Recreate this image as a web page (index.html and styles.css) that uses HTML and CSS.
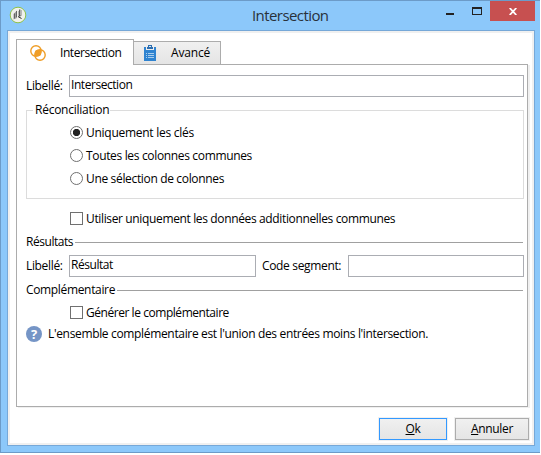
FILE: index.html
```
<!DOCTYPE html>
<html lang="fr">
<head>
<meta charset="utf-8">
<title>Intersection</title>
<link rel="stylesheet" href="styles.css">
</head>
<body>
<div class="window">
  <header class="titlebar">
    <svg class="app-icon" width="18" height="18" viewBox="0 0 18 18"><circle cx="9" cy="9" r="7.8" fill="#f1f1ec" stroke="#8fc24a" stroke-width="1"/><path d="M4.5 8L8 4.5V12L4.5 13.5Z" fill="#a0a0a0"/><path d="M5.5 7.5v5M7.5 5v6" stroke="#555" stroke-width=".8"/><path d="M9.5 5v4.5h3V4" fill="none" stroke="#aaa" stroke-width=".8"/><path d="M10.8 3.5v7M9 10.5l3.5 2" stroke="#222"/></svg>
    <h1 class="title">Intersection</h1>
    <div class="controls">
      <span class="minimize"></span>
      <span class="maximize"></span>
      <span class="close"><svg width="8" height="7" viewBox="0 0 8 7"><path d="M.7 0L7.3 7M7.3 0L.7 7" stroke="#fff" stroke-width="1.8"/></svg></span>
    </div>
  </header>
  <main class="client">
    <nav class="tabs">
      <div class="tab active">
        <svg width="18" height="18" viewBox="0 0 18 18"><path d="M5.9 11.9A5.2 5.2 0 0 1 11.9 5.9A5.2 5.2 0 0 1 5.9 11.9Z" fill="#ef9d26"/><g stroke="#ef9d26" stroke-width="1.4" fill="none"><circle cx="7" cy="7" r="5.2"/><circle cx="11" cy="11" r="5.2"/></g><circle cx="9" cy="9" r="3.2" fill="#ef9d26"/></svg>
        <span class="narrow">Intersection</span>
      </div>
      <div class="tab second">
        <svg width="12" height="16" viewBox="0 0 12 16"><path d="M0 2H2V5H10V2H12V16H0Z" fill="#2f83d0"/><path d="M3 4V2H4V0H8V2H9V4Z" fill="#2c6cae"/><rect x="5" y="1" width="2" height="1" fill="#dcecf8"/><path d="M2 8.5h1M4 8.5h6M2 10.5h1M4 10.5h6M2 12.5h1M4 12.5h6" stroke="#a9cdec"/></svg>
        <span>Avancé</span>
      </div>
    </nav>
    <section class="panel">
      <div class="row name"><label>Libellé:</label><div class="field"><span class="narrow">Intersection</span></div></div>
      <fieldset class="group">
        <legend>Réconciliation</legend>
        <div class="option"><i class="radio on"></i><span class="loose">Uniquement les clés</span></div>
        <div class="option"><i class="radio"></i><span>Toutes les colonnes communes</span></div>
        <div class="option"><i class="radio"></i><span>Une sélection de colonnes</span></div>
      </fieldset>
      <div class="option extra"><i class="check"></i><span class="tight">Utiliser uniquement les données additionnelles communes</span></div>
      <div class="heading results"><span class="narrow">Résultats</span></div>
      <div class="row output"><label>Libellé:</label><div class="field short"><span class="narrow">Résultat</span></div><label class="code">Code segment:</label><div class="field"></div></div>
      <div class="heading complement"><span>Complémentaire</span></div>
      <div class="option generate"><i class="check"></i><span class="narrow">Générer le complémentaire</span></div>
      <div class="hint"><b class="help">?</b><span>L'ensemble complémentaire est l'union des entrées moins l'intersection.</span></div>
    </section>
    <footer class="actions">
      <div class="button primary"><span><u>O</u>k</span></div>
      <div class="button"><span><u>A</u>nnuler</span></div>
    </footer>
  </main>
</div>
</body>
</html>
```
FILE: styles.css
```
* { box-sizing: border-box; }
body { margin: 0; background: #fff; color: #000; font: 12px/16px "Open Sans", "Noto Sans", sans-serif; letter-spacing: -.34px; overflow: hidden; white-space: nowrap; }
svg { display: block; flex: none; }
.window { width: 540px; height: 453px; background: #8cc8fa; border: 1px solid #6c9bc8; border-right: 0; padding: 0 5px 0 6px; display: flex; flex-direction: column; }
.titlebar { height: 29px; display: flex; flex: none; }
.app-icon { margin: 5px 0 0 2px; }
.title { margin: 4px 0 0 225px; font-size: 15px; line-height: 20px; font-weight: 400; color: #29313a; letter-spacing: -.58px; }
.controls { display: flex; margin-left: auto; }
.minimize { width: 8px; height: 2px; margin: 12px 18px 0 0; background: #222; }
.maximize { width: 10px; height: 8px; margin: 6px 8px 0 0; border: 1px solid #222; border-top-width: 2px; }
.close { width: 45px; height: 20px; background: #c75050; display: flex; align-items: center; justify-content: center; }
.client { width: 528px; height: 416px; border: 1px solid #76a8d8; background: #fff; box-shadow: inset 0 0 0 2px #f0f0f0; padding: 8px 5px 5px 8px; display: flex; flex-direction: column; }
.tabs { display: flex; align-items: flex-end; height: 26px; position: relative; flex: none; }
.tab { border: 1px solid #acacac; display: flex; align-items: center; }
.active { width: 118px; height: 26px; background: #fff; border-bottom: 0; padding-left: 12px; }
.active span { margin-left: 13px; }
.second { width: 88px; height: 24px; margin-left: -1px; background: linear-gradient(#f0f0f0, #e5e5e5); padding-left: 10px; }
.second span { margin-left: 15px; letter-spacing: -.15px; }
.panel { width: 512px; height: 343px; margin-top: -1px; border: 1px solid #acacac; box-shadow: 2px 1px 0 #f0f0f0; padding: 10px 3px 0 9px; flex: none; }
.row { display: flex; align-items: center; height: 22px; }
.row label { width: 43px; flex: none; }
.field { flex: 1; height: 22px; border: 1px solid #abadb3; padding: 1px 0 0 1px; background: #fff; }
.group { width: 498px; height: 97px; margin: 5px 0 0; border: 1px solid #dcdcdc; padding: 3px 0 0 43px; }
.group legend { margin-left: -37px; padding: 0 1px 0 2px; line-height: 16px; letter-spacing: -.25px; }
.option { display: flex; align-items: center; height: 23px; }
.radio { width: 13px; height: 13px; margin-right: 3px; border: 1px solid #707070; border-radius: 50%; background: #fff; flex: none; }
.radio.on { background: radial-gradient(circle, #222 0 3.3px, #fff 4px); }
.check { width: 13px; height: 13px; margin-right: 3px; border: 1px solid #707070; flex: none; }
.tight { letter-spacing: -.36px; }
.narrow { letter-spacing: -.45px; }
.loose { letter-spacing: -.27px; }
.extra { margin: 8px 0 0 44px; }
.heading { display: flex; align-items: center; height: 16px; width: 497px; }
.heading::after { content: ""; flex: 1; height: 1px; margin-left: 2px; background: #a0a0a0; }
.results { margin-top: 4px; }
.output { margin-top: 5px; }
.output .short { flex: none; width: 187px; }
.output .code { width: 86px; margin-left: 6px; }
.complement { margin-top: 5px; }
.generate { margin: 3px 0 0 44px; }
.hint { display: flex; align-items: center; height: 20px; }
.help { width: 16px; height: 16px; border-radius: 50%; background: #7595c6; color: #fff; text-align: center; margin-right: 6px; font-size: 13px; letter-spacing: 0; }
.actions { display: flex; justify-content: flex-end; gap: 8px; margin-top: 11px; }
.button { width: 74px; height: 22px; border: 1px solid #acacac; background: linear-gradient(#f0f0f0, #e5e5e5); box-shadow: 0 0 0 1px #f0f0f0; text-align: center; line-height: 20px; }
.primary { width: 68px; border-color: #3399ff; }
```
